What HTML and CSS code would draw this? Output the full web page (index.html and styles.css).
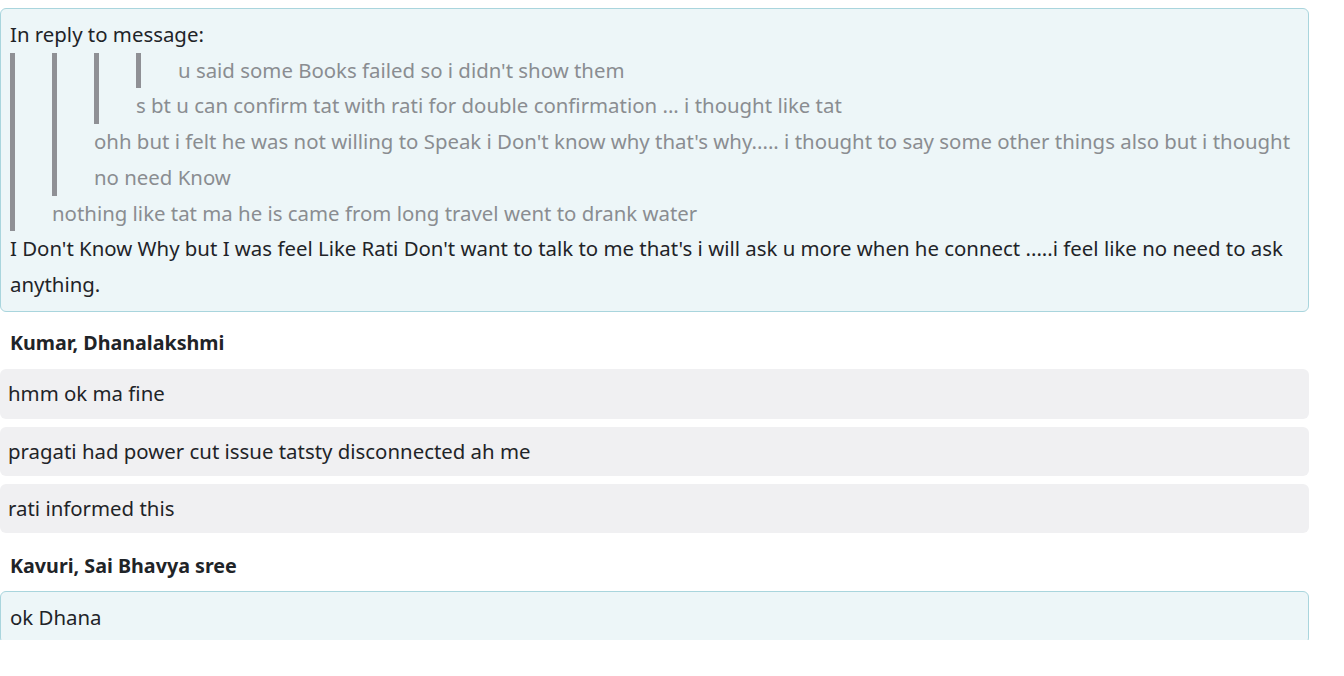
FILE: index.html
```html
<!DOCTYPE html>
<html lang="en">
<head>
<meta charset="utf-8">
<title>Chat</title>
<link rel="stylesheet" href="styles.css">
</head>
<body>
<div class="chat">
  <div class="msg msg-own reply">
    <div class="reply-label">In reply to message:</div>
    <blockquote class="quote">
      <blockquote class="quote">
        <blockquote class="quote">
          <blockquote class="quote">u said some Books failed so i didn't show them</blockquote>
          s bt u can confirm tat with rati for double confirmation ... i thought like tat
        </blockquote>
        ohh but i felt he was not willing to Speak i Don't know why that's why..... i thought to say some other things also but i thought no need Know
      </blockquote>
      nothing like tat ma he is came from long travel went to drank water
    </blockquote>
    I Don't Know Why but I was feel Like Rati Don't want to talk to me that's i will ask u more when he connect .....i feel like no need to ask anything.
  </div>

  <div class="author">Kumar, Dhanalakshmi</div>
  <div class="msg msg-other">hmm ok ma fine</div>
  <div class="msg msg-other">pragati had power cut issue tatsty disconnected ah me</div>
  <div class="msg msg-other">rati informed this</div>

  <div class="author author-2">Kavuri, Sai Bhavya sree</div>
  <div class="msg msg-own">ok Dhana</div>
</div>
</body>
</html>
```
FILE: styles.css
```css
html, body {
  margin: 0;
  padding: 0;
  background: #ffffff;
}

body {
  font-family: "Noto Sans", "Open Sans", sans-serif;
  font-size: 20.4px;
  line-height: 35.7px;
  color: #1f2428;
}

.chat {
  width: 1309px;
  height: 640px;
  overflow: hidden;
  padding-top: 8px;
  box-sizing: border-box;
  display: flex;
  flex-direction: column;
}

.msg {
  border-radius: 6px;
  flex: none;
}

.msg-own {
  background: #edf6f8;
  border: 1px solid #a9d5dd;
  padding: 8px 9px 8px 9px;
}

.msg-other {
  background: #f0f0f2;
  padding: 7px 8px;
  margin-bottom: 7.5px;
}

.reply-label {
  color: #1f2428;
}

.quote {
  margin: 0;
  border-left: 5px solid #8f9095;
  padding-left: 37px;
  color: #8a8d91;
}

.author {
  font-size: 19.7px;
  font-weight: 700;
  margin: 13px 0 9px 10px;
  color: #1f2428;
}

.author-2 {
  margin-top: 7px;
  margin-bottom: 7px;
}
```
